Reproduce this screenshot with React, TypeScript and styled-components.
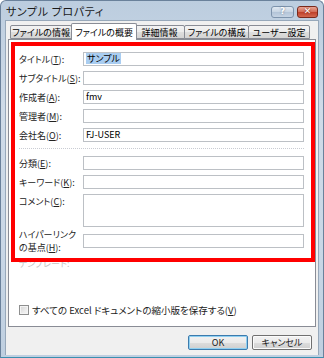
import React from 'react';
import styled, { createGlobalStyle } from 'styled-components';

const GlobalStyle = createGlobalStyle`
  html, body {
    margin: 0;
    padding: 0;
    background: #ffffff;
  }
  body {
    font-family: "Noto Sans CJK JP", "Liberation Sans", sans-serif;
    font-feature-settings: "palt";
  }
`;

const Window = styled.div`
  width: 324px;
  height: 358px;
  box-sizing: border-box;
  display: flex;
  flex-direction: column;
  padding: 0 4px 2px 4px;
  border: 1px solid #6a819b;
  border-bottom-color: #3a8fb0;
  border-radius: 6px 6px 0 0;
  background: linear-gradient(to bottom, #bccddf 0%, #cfdbe8 30%, #c9d7e6 70%, #bfcfe0 100%);
`;

const TitleBar = styled.div`
  height: 19px;
  display: flex;
  align-items: center;
  justify-content: space-between;
`;

const Title = styled.span`
  font-size: 11px;
  color: #1a1a1a;
  padding-left: 1px;
  letter-spacing: 0.6px;
`;

const CaptionButtons = styled.div`
  display: flex;
  gap: 3px;
  margin-right: 1px;
  margin-top: 2px;
`;

const CaptionButton = styled.div<{ $close?: boolean }>`
  width: ${(p) => (p.$close ? 21 : 23)}px;
  height: 12px;
  box-sizing: border-box;
  border: 1px solid ${(p) => (p.$close ? '#7a2a1c' : '#7d93ac')};
  border-radius: 3px;
  display: flex;
  align-items: center;
  justify-content: center;
  font-family: "DejaVu Sans", sans-serif;
  font-weight: bold;
  font-size: 9px;
  line-height: 1;
  color: #ffffff;
  background: ${(p) =>
    p.$close
      ? 'linear-gradient(to bottom, #e9a493 0%, #d4705a 45%, #c0432c 55%, #d3684f 100%)'
      : 'linear-gradient(to bottom, #e1e9f2 0%, #c9d6e4 45%, #b4c5d8 55%, #c6d4e4 100%)'};
  text-shadow: 0 0 2px ${(p) => (p.$close ? '#6e1a0e' : '#5a6f88')};
`;

const Client = styled.div`
  flex: 1;
  display: flex;
  flex-direction: column;
  background: #f0f0f0;
  padding: 3px 2px 0 2px;
  border: 1px solid #97a8ba;
  border-bottom: none;
`;

const TabStrip = styled.div`
  display: flex;
  align-items: flex-end;
  height: 16px;
  padding-left: 2px;
  position: relative;
  z-index: 1;
`;

const Tab = styled.div<{ $w: number; $active?: boolean }>`
  width: ${(p) => p.$w}px;
  height: ${(p) => (p.$active ? 17 : 14)}px;
  box-sizing: border-box;
  margin: ${(p) => (p.$active ? '0 -2px 0 -2px' : '0 0 1px 0')};
  border: 1px solid #898c95;
  border-bottom: ${(p) => (p.$active ? 'none' : '1px solid #898c95')};
  border-radius: 2px 2px 0 0;
  background: ${(p) =>
    p.$active ? '#ffffff' : 'linear-gradient(to bottom, #f3f3f3 0%, #ebebeb 50%, #dedede 51%, #d4d4d4 100%)'};
  font-size: 9px;
  color: #000000;
  display: flex;
  align-items: center;
  justify-content: center;
  white-space: nowrap;
  position: relative;
  z-index: ${(p) => (p.$active ? 2 : 1)};
  & + & {
    margin-left: ${(p) => (p.$active ? -2 : -1)}px;
  }
`;

const Panel = styled.div`
  position: relative;
  height: 288px;
  box-sizing: border-box;
  margin-top: -1px;
  background: #ffffff;
  border: 1px solid #898c95;
  display: flex;
  flex-direction: column;
  padding: 12px 11px 9px 10px;
`;

const Form = styled.div`
  display: flex;
  flex-direction: column;
  gap: 5px;
`;

const Row = styled.div<{ $top?: boolean; $mt?: number }>`
  display: flex;
  align-items: ${(p) => (p.$top ? 'flex-start' : 'center')};
  margin-top: ${(p) => p.$mt ?? 0}px;
`;

const Label = styled.div<{ $mt?: number }>`
  width: 64px;
  flex-shrink: 0;
  font-size: 9px;
  line-height: 9px;
  color: #222222;
  white-space: nowrap;
  margin-top: ${(p) => p.$mt ?? 0}px;
`;

const TwoLineLabel = styled(Label)`
  line-height: 13px;
  margin: -6px 0;
`;

const Field = styled.div<{ $h?: number }>`
  flex: 1;
  height: ${(p) => p.$h ?? 14}px;
  box-sizing: border-box;
  border: 1px solid #bcc0c5;
  background: #ffffff;
  font-size: 9px;
  line-height: 12px;
  padding-left: 2px;
  color: #000000;
  display: flex;
  align-items: flex-start;
`;

const Selected = styled.span`
  background: #a9cdf1;
  padding: 0 1px;
  line-height: 11px;
`;

const Mn = styled.span`
  text-decoration: underline;
`;

const Separator = styled.div`
  height: 0;
  border-top: 1px dotted #c9ccd3;
  margin: 6px 0 7px 0;
`;

const Disabled = styled.div`
  font-size: 9px;
  line-height: 9px;
  color: #c4c4c4;
  margin-top: 11px;
`;

const CheckRow = styled.label`
  margin-top: auto;
  display: flex;
  align-items: center;
  gap: 3px;
  font-size: 9.5px;
  color: #222222;
  white-space: nowrap;
`;

const Box = styled.span`
  width: 10px;
  height: 10px;
  box-sizing: border-box;
  border: 1px solid #8e8f8f;
  background: linear-gradient(135deg, #d4d4d4 0%, #ececec 60%, #f6f6f6 100%);
  box-shadow: inset 0 0 0 1px #f4f4f4;
`;

const RedFrame = styled.div`
  position: absolute;
  left: 2px;
  top: 2px;
  width: 304px;
  height: 220px;
  box-sizing: border-box;
  border: 4px solid #ff0000;
  pointer-events: none;
`;

const ButtonBar = styled.div`
  display: flex;
  justify-content: flex-end;
  gap: 4px;
  padding: 8px 4px 0 0;
`;

const Button = styled.div<{ $default?: boolean }>`
  width: 60px;
  height: 15px;
  box-sizing: border-box;
  border: 1px solid ${(p) => (p.$default ? '#3d7bad' : '#707070')};
  border-radius: 2px;
  background: linear-gradient(to bottom, #f2f2f2 0%, #ebebeb 50%, #dddddd 51%, #cfcfcf 100%);
  box-shadow: inset 0 0 0 1px ${(p) => (p.$default ? '#8fd0f2' : '#fbfbfb')};
  font-size: 9px;
  color: #1a1a1a;
  display: flex;
  align-items: center;
  justify-content: center;
`;

type FieldDef = { label: React.ReactNode; value?: React.ReactNode };

const group1: FieldDef[] = [
  { label: <>タイトル(<Mn>T</Mn>):</>, value: <Selected>サンプル</Selected> },
  { label: <>サブタイトル(<Mn>S</Mn>):</> },
  { label: <>作成者(<Mn>A</Mn>):</>, value: 'fmv' },
  { label: <>管理者(<Mn>M</Mn>):</> },
  { label: <>会社名(<Mn>O</Mn>):</>, value: 'FJ-USER' },
];

const group2: FieldDef[] = [
  { label: <>分類(<Mn>E</Mn>):</> },
  { label: <>キーワード(<Mn>K</Mn>):</> },
];

const tabs = [
  { name: 'ファイルの情報', w: 62 },
  { name: 'ファイルの概要', w: 66, active: true },
  { name: '詳細情報', w: 51 },
  { name: 'ファイルの構成', w: 65 },
  { name: 'ユーザー設定', w: 62 },
];

const App = () => {
  return (
    <>
      <GlobalStyle />
      <Window>
        <TitleBar>
          <Title>サンプル プロパティ</Title>
          <CaptionButtons>
            <CaptionButton>?</CaptionButton>
            <CaptionButton $close>✕</CaptionButton>
          </CaptionButtons>
        </TitleBar>
        <Client>
          <TabStrip>
            {tabs.map((t) => (
              <Tab key={t.name} $w={t.w} $active={t.active}>
                {t.name}
              </Tab>
            ))}
          </TabStrip>
          <Panel>
            <Form>
              {group1.map((f, i) => (
                <Row key={i}>
                  <Label>{f.label}</Label>
                  <Field>{f.value}</Field>
                </Row>
              ))}
            </Form>
            <Separator />
            <Form>
              {group2.map((f, i) => (
                <Row key={i}>
                  <Label>{f.label}</Label>
                  <Field>{f.value}</Field>
                </Row>
              ))}
              <Row $top>
                <Label $mt={3}>
                  コメント(<Mn>C</Mn>):
                </Label>
                <Field $h={33} />
              </Row>
            </Form>
            <Row $mt={7}>
              <TwoLineLabel>
                ハイパーリンク
                <br />
                の基点(<Mn>H</Mn>):
              </TwoLineLabel>
              <Field />
            </Row>
            <Disabled>テンプレート:</Disabled>
            <CheckRow>
              <Box />
              <span>
                すべての Excel ドキュメントの縮小版を保存する(<Mn>V</Mn>)
              </span>
            </CheckRow>
            <RedFrame />
          </Panel>
          <ButtonBar>
            <Button $default>OK</Button>
            <Button>キャンセル</Button>
          </ButtonBar>
        </Client>
      </Window>
    </>
  );
};

export default App;
